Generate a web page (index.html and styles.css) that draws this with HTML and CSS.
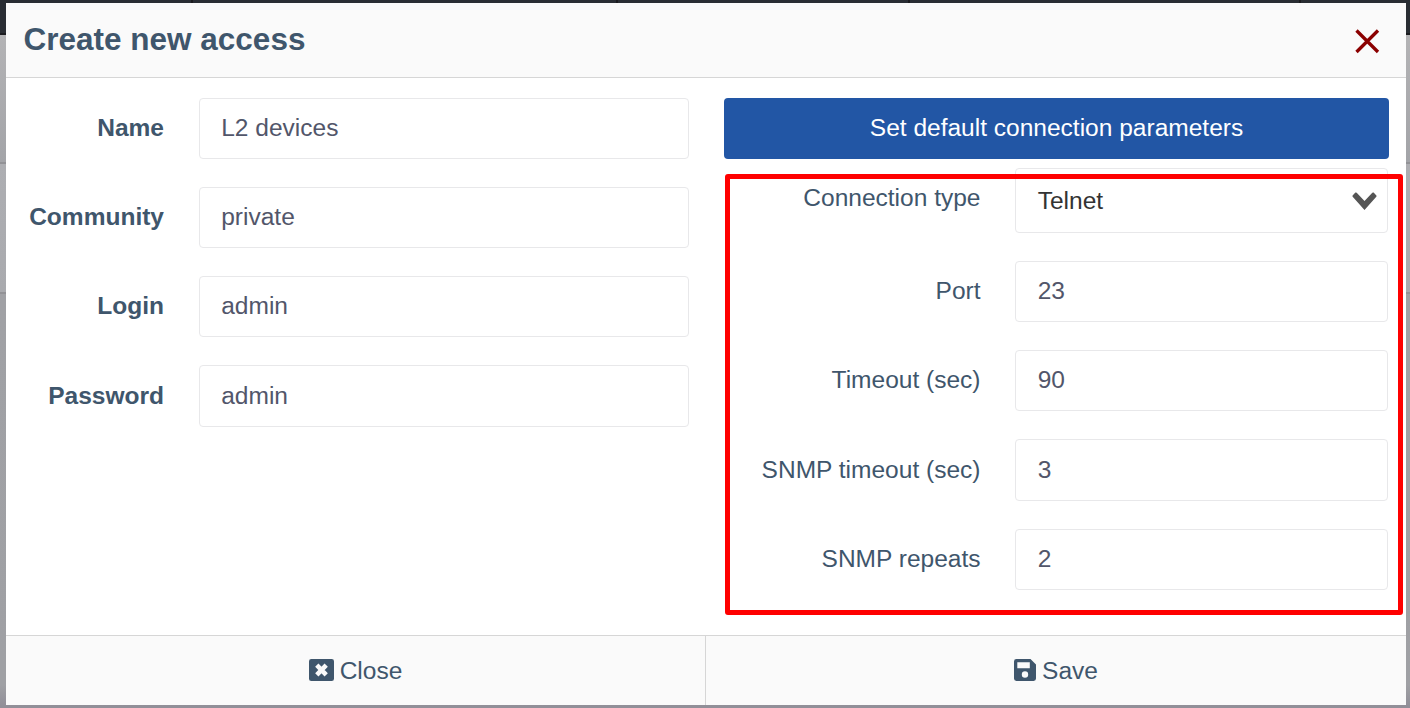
FILE: index.html
```html
<!DOCTYPE html>
<html lang="en">
<head>
<meta charset="utf-8">
<title>Create new access</title>
<link rel="stylesheet" href="styles.css">
</head>
<body>
<div class="topbar"><i class="tab1"></i><i class="tab2"></i><i class="tab3"></i><i class="tab4"></i></div>
<div class="backdrop"></div>
<main class="modal">
  <header class="header">
    <h1 class="title">Create new access</h1>
    <svg class="dismiss" viewBox="0 0 26 26"><path d="M2.5 2.5L24 24M24 2.5L2.5 24"/></svg>
  </header>
  <section class="body">
    <div class="account">
      <div class="row"><span class="label">Name</span><div class="field">L2 devices</div></div>
      <div class="row"><span class="label">Community</span><div class="field">private</div></div>
      <div class="row"><span class="label">Login</span><div class="field">admin</div></div>
      <div class="row row-last"><span class="label">Password</span><div class="field">admin</div></div>
    </div>
    <div class="connection">
      <div class="defaults">Set default connection parameters</div>
      <div class="row row-select"><span class="label">Connection type</span>
        <div class="field select"><span>Telnet</span><svg class="chevron" viewBox="0 0 25 18"><path d="M0.6 3.4L3.4 0.6Q4 0.2 4.7 0.7L12.5 9L20.3 0.7Q21 0.2 21.6 0.6L24.4 3.4Q24.8 4.1 24.3 4.8L12.5 18L0.7 4.8Q0.2 4.1 0.6 3.4Z"/></svg></div></div>
      <div class="row"><span class="label">Port</span><div class="field">23</div></div>
      <div class="row"><span class="label">Timeout (sec)</span><div class="field">90</div></div>
      <div class="row row-low"><span class="label">SNMP timeout (sec)</span><div class="field">3</div></div>
      <div class="row"><span class="label">SNMP repeats</span><div class="field">2</div></div>
      <div class="highlight"></div>
    </div>
  </section>
  <footer class="footer">
    <div class="action action-close">
      <svg class="icon-close" viewBox="0 0 25 22"><rect width="25" height="22" rx="2.3"/><path d="M7.8 6.2L17.2 15.8M17.2 6.2L7.8 15.8"/></svg><span>Close</span>
    </div>
    <div class="action">
      <svg class="icon-save" viewBox="0 0 22 22"><path fill-rule="evenodd" d="M2.4 0H16.5L22 5.5V19.6Q22 22 19.6 22H2.4Q0 22 0 19.6V2.4Q0 0 2.4 0ZM3.3 3.2V9.2H15.8V3.2ZM11 12.3A3.2 3.2 0 1 0 11 18.7A3.2 3.2 0 1 0 11 12.3Z"/></svg><span>Save</span>
    </div>
  </footer>
</main>
</body>
</html>
```
FILE: styles.css
```css
* { box-sizing: border-box; }
body {
  margin: 0;
  width: 1410px;
  height: 708px;
  overflow: hidden;
  padding: 3px 4px 3px 6px;
  position: relative;
  font-family: "Liberation Sans", Arial, sans-serif;
  font-size: 24.53px;
  color: #3f566c;
  background: #a0a1a5;
}
.topbar {
  position: absolute;
  inset: 0 0 auto;
  height: 35px;
  background: #292d33;
  border-bottom: 2px solid #1b1c20;
  display: grid;
  grid-template-columns: 193px 425px 292px 391px;
}
.topbar i { height: 3px; border-right: 2px solid #1b1b1e; }
.backdrop {
  position: absolute;
  inset: 35px 0 0;
  background:
    linear-gradient(#929296, #929296) 0 127px / 100% 2px no-repeat,
    linear-gradient(#929296, #929296) 0 257px / 100% 2px no-repeat,
    linear-gradient(#b3b3b5 0, #a3a4a8 127px, #adaeb2 129px, #a9aaae 257px, #a0a1a5 259px, #9fa0a4 650px, #918f98 671px);
}
.modal {
  position: relative;
  height: 702px;
  display: flex;
  flex-direction: column;
  background: #fff;
}
.header {
  flex: 0 0 75px;
  display: flex;
  justify-content: space-between;
  padding: 0 26px 0 17.5px;
  background: #fafafa;
  border-bottom: 1px solid #d6d6d6;
}
.title { margin: 0; font-size: 31.5px; line-height: 73px; }
.dismiss { width: 26px; height: 26px; margin-top: 25px; fill: none; stroke: #8b0000; stroke-width: 3.3; }
.body { flex: 1; display: flex; padding: 20px 17px 0 0; gap: 35px; }
.account { width: 683px; display: flex; flex-direction: column; gap: 28px; }
.connection { position: relative; width: 665px; display: flex; flex-direction: column; gap: 28px; }
.row { display: flex; justify-content: flex-end; gap: 35px; height: 61.2px; line-height: 58.6px; }
.account .row { height: 61.1px; }
.account .row-last { height: 61.5px; line-height: 60px; }
.label { line-height: 60.4px; }
.row-last .label, .row-low .label { line-height: 62px; }
.connection .row-low { line-height: 60px; }
.account .label { font-weight: bold; }
.field {
  width: 490px;
  padding-left: 21.2px;
  border: 1px solid #e8e8ea;
  border-radius: 4px;
  color: #52566a;
}
.connection .field { width: 373px; padding-left: 21.7px; }
.connection .row { padding-right: 1px; width: 100%; gap: 34.5px; }
.defaults {
  height: 61px;
  line-height: 59px;
  text-align: center;
  color: #fff;
  background: #2256a5;
  border-radius: 4px;
}
.connection .row-select { height: 65px; margin-top: -19px; }
.row-select .label { line-height: 60px; }
.row-select .field { display: flex; justify-content: space-between; padding-right: 10.5px; color: #333; line-height: 64px; }
.chevron { width: 25px; height: 18px; margin-top: 22.7px; fill: #555; }
.highlight {
  position: absolute;
  left: 1px;
  top: 76px;
  width: 678px;
  height: 441px;
  border: 5px solid #f00;
  border-radius: 3px;
}
.footer {
  flex: 0 0 70px;
  display: flex;
  background: #fafafa;
  border-top: 1px solid #d6d6d6;
}
.action { flex: 1; display: flex; align-items: center; justify-content: center; gap: 6px; }
.action-close { flex: 0 0 700px; border-right: 1px solid #d6d6d6; }
.icon-close { width: 25px; height: 22px; margin-bottom: 2px; fill: #3f566c; }
.icon-close path { stroke: #fafafa; stroke-width: 4.6; }
.icon-save { width: 22px; height: 22px; margin-bottom: 2px; fill: #3f566c; }
```
